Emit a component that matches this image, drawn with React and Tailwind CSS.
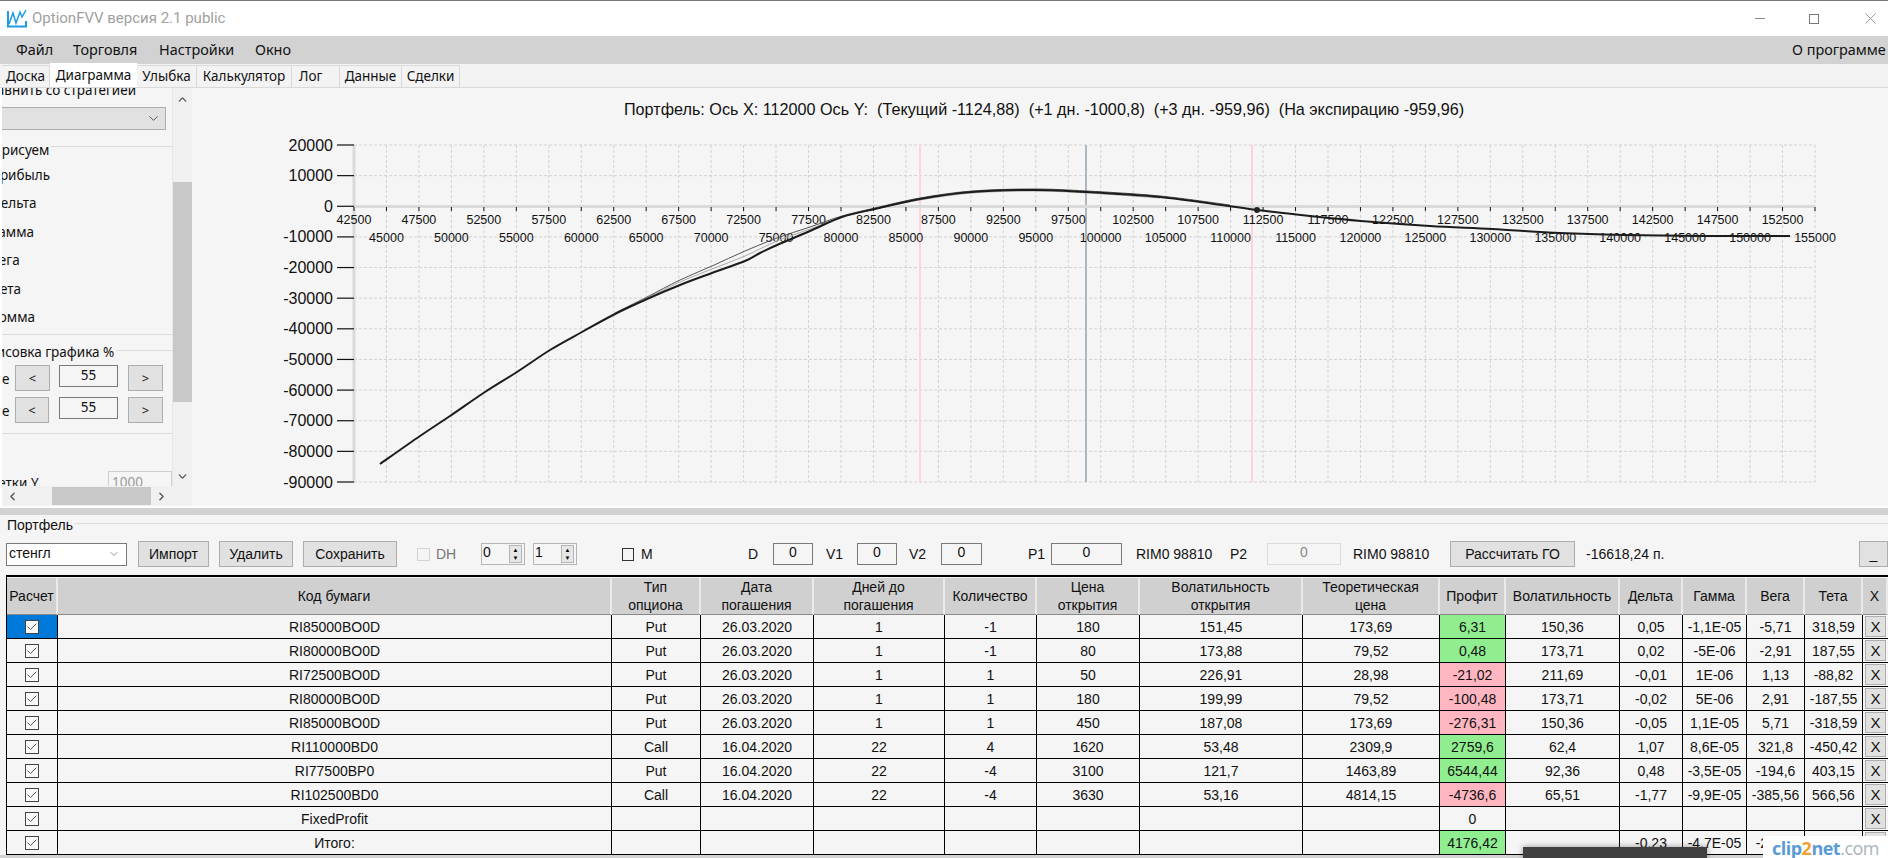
import { ChevronDown, ChevronLeft, ChevronRight, ChevronUp, Check } from "lucide-react";

const columns = [51, 554, 89, 113, 131, 92, 103, 163, 137, 66, 114, 63, 64, 58, 58, 25];

const headers = [
  ["Расчет"],
  ["Код бумаги"],
  ["Тип", "опциона"],
  ["Дата", "погашения"],
  ["Дней до", "погашения"],
  ["Количество"],
  ["Цена", "открытия"],
  ["Волатильность", "открытия"],
  ["Теоретическая", "цена"],
  ["Профит"],
  ["Волатильность"],
  ["Дельта"],
  ["Гамма"],
  ["Вега"],
  ["Тета"],
  ["X"],
];

const rows = [
  ["RI85000BO0D", "Put", "26.03.2020", "1", "-1", "180", "151,45", "173,69", "6,31", "150,36", "0,05", "-1,1E-05", "-5,71", "318,59"],
  ["RI80000BO0D", "Put", "26.03.2020", "1", "-1", "80", "173,88", "79,52", "0,48", "173,71", "0,02", "-5E-06", "-2,91", "187,55"],
  ["RI72500BO0D", "Put", "26.03.2020", "1", "1", "50", "226,91", "28,98", "-21,02", "211,69", "-0,01", "1E-06", "1,13", "-88,82"],
  ["RI80000BO0D", "Put", "26.03.2020", "1", "1", "180", "199,99", "79,52", "-100,48", "173,71", "-0,02", "5E-06", "2,91", "-187,55"],
  ["RI85000BO0D", "Put", "26.03.2020", "1", "1", "450", "187,08", "173,69", "-276,31", "150,36", "-0,05", "1,1E-05", "5,71", "-318,59"],
  ["RI110000BD0", "Call", "16.04.2020", "22", "4", "1620", "53,48", "2309,9", "2759,6", "62,4", "1,07", "8,6E-05", "321,8", "-450,42"],
  ["RI77500BP0", "Put", "16.04.2020", "22", "-4", "3100", "121,7", "1463,89", "6544,44", "92,36", "0,48", "-3,5E-05", "-194,6", "403,15"],
  ["RI102500BD0", "Call", "16.04.2020", "22", "-4", "3630", "53,16", "4814,15", "-4736,6", "65,51", "-1,77", "-9,9E-05", "-385,56", "566,56"],
  ["FixedProfit", "", "", "", "", "", "", "", "0", "", "", "", "", ""],
  ["Итого:", "", "", "", "", "", "", "", "4176,42", "", "-0,23", "-4,7E-05", "-258,3", ""],
];

const tabs = [
  { name: "Доска", w: "w-[48px] justify-center" },
  { name: "Диаграмма", w: "w-[87px] justify-center", active: true },
  { name: "Улыбка", w: "w-[60px] justify-center" },
  { name: "Калькулятор", w: "w-[95px] justify-center" },
  { name: "Лог", w: "w-[48px] pl-[7px]" },
  { name: "Данные", w: "w-[62px] justify-center" },
  { name: "Сделки", w: "w-[58px] justify-center" },
];

// chart geometry, in page coordinates
const LEFT = 354;
const RIGHT = 1815;
const TOP = 145;
const BOTTOM = 482;
const stepX = (RIGHT - LEFT) / 45;
const stepY = (BOTTOM - TOP) / 11;

const mainCurve = [
  [380, 464], [420, 436], [450, 416], [485, 392], [517, 372], [550, 350], [582, 332], [615, 314], [647, 299],
  [680, 285], [712, 273], [745, 261], [760, 253], [777, 245], [810, 231], [842, 217], [875, 209], [920, 199],
  [972, 192], [1033, 190], [1087, 192], [1120, 194], [1160, 197], [1200, 202], [1257, 210], [1310, 216],
  [1361, 221], [1430, 226], [1492, 229], [1560, 233], [1623, 235], [1700, 236], [1790, 236],
];
const upperCurve = [
  [615, 313], [647, 297], [680, 280], [712, 266], [745, 251], [777, 238], [810, 227], [842, 216], [875, 208],
  [920, 198], [972, 191], [1033, 189], [1087, 191], [1160, 196], [1230, 205],
];
const lightCurve = [
  [647, 298], [680, 282], [712, 269], [745, 256], [777, 241], [810, 229], [842, 217], [875, 209], [920, 200],
  [972, 193], [1033, 191], [1087, 193], [1160, 198],
];

// catmull-rom through the points
function smooth(pts) {
  let d = `M${pts[0][0]} ${pts[0][1]}`;
  for (let i = 0; i < pts.length - 1; i++) {
    const p0 = pts[i - 1] || pts[i];
    const p1 = pts[i];
    const p2 = pts[i + 1];
    const p3 = pts[i + 2] || p2;
    const c1x = p1[0] + (p2[0] - p0[0]) / 6;
    const c1y = p1[1] + (p2[1] - p0[1]) / 6;
    const c2x = p2[0] - (p3[0] - p1[0]) / 6;
    const c2y = p2[1] - (p3[1] - p1[1]) / 6;
    d += ` C${c1x} ${c1y} ${c2x} ${c2y} ${p2[0]} ${p2[1]}`;
  }
  return d;
}

function Chart() {
  const vertical = Array.from({ length: 46 }, (_, i) => LEFT + i * stepX);
  const horizontal = Array.from({ length: 12 }, (_, i) => TOP + i * stepY);
  return (
    <svg width="1696" height="418" viewBox="192 88 1696 418" className="block shrink-0 font-['Liberation_Sans',Arial,sans-serif]">
      <text x="1044" y="115" textAnchor="middle" fontSize="16.2" fill="#111" className="whitespace-pre">
        {"Портфель: Ось X: 112000 Ось Y:  (Текущий -1124,88)  (+1 дн. -1000,8)  (+3 дн. -959,96)  (На экспирацию -959,96)"}
      </text>
      {vertical.map((x) => (
        <line key={x} x1={x} x2={x} y1={TOP} y2={BOTTOM} stroke="#d2d2d2" strokeDasharray="3 2" />
      ))}
      {horizontal.map((y) => (
        <line key={y} x1={LEFT} x2={RIGHT} y1={y} y2={y} stroke="#d2d2d2" strokeDasharray="3 2" />
      ))}
      <line x1={920} x2={920} y1={TOP} y2={BOTTOM} stroke="#ffd2dc" strokeWidth="2" />
      <line x1={1252} x2={1252} y1={TOP} y2={BOTTOM} stroke="#ffd2dc" strokeWidth="2" />
      <line x1={1086} x2={1086} y1={TOP} y2={BOTTOM} stroke="#aeb7c0" strokeWidth="2" />
      <line x1={LEFT} x2={LEFT} y1={TOP} y2={BOTTOM} stroke="#dadada" strokeWidth="3" />
      <line x1={LEFT} x2={RIGHT} y1={206.5} y2={206.5} stroke="#dadada" strokeWidth="3" />
      {vertical.map((x) => (
        <line key={x} x1={x} x2={x} y1={207} y2={211} stroke="#111" />
      ))}
      {horizontal.map((y, i) => (
        <g key={y}>
          <line x1={337} x2={LEFT} y1={y} y2={y} stroke="#111" strokeWidth="1.2" />
          <text x="333" y={y + 5.5} textAnchor="end" fontSize="16" fill="#111">
            {20000 - i * 10000}
          </text>
        </g>
      ))}
      {vertical.map((x, i) => (
        <text
          key={x}
          x={x}
          y={i % 2 === 0 ? 224 : 242}
          textAnchor="middle"
          fontSize="12.5"
          fill="#111"
        >
          {42500 + i * 2500}
        </text>
      ))}
      <path d={smooth(lightCurve)} fill="none" stroke="#aaaaaa" strokeWidth="1" />
      <path d={smooth(upperCurve)} fill="none" stroke="#555555" strokeWidth="1" />
      <path d={smooth(mainCurve)} fill="none" stroke="#1c1c1c" strokeWidth="2" strokeLinejoin="round" />
      <circle cx="1257" cy="210" r="3" fill="#222" />
    </svg>
  );
}

function Logo() {
  return (
    <svg width="20" height="20" viewBox="0 0 20 20" fill="none" stroke="#1c9ce5" className="ml-[7px] shrink-0">
      <path d="M1 2 V17.5 H19 V12" strokeWidth="2" />
      <path d="M2 15 L6 4 L9 14 L13 3 L15 8 L19 1" strokeWidth="1.5" />
    </svg>
  );
}

function CheckBox({ className = "" }) {
  return (
    <span className={`inline-flex h-[14px] w-[14px] items-center justify-center border border-[#444] bg-[#f8f8f8] align-middle ${className}`}>
      <Check size={12} strokeWidth={1.5} color="#222" />
    </span>
  );
}

function Btn({ w, h = "h-[26px]", ml = "", children }) {
  return (
    <button className={`${w} ${h} ${ml} shrink-0 border border-[#adadad] bg-[#e1e1e1] text-[14px] text-[#111]`}>
      {children}
    </button>
  );
}

function Box({ w, ml, children, disabled }) {
  return (
    <div
      className={`${w} ${ml} flex h-[22px] shrink-0 items-center justify-center border ${
        disabled ? "border-[#dadada] text-[#888]" : "border-[#7a7a7a] text-[#111]"
      } bg-[#f5f5f5] pb-[3px]`}
    >
      {children}
    </div>
  );
}

function Spin({ value, ml }) {
  return (
    <div className={`${ml} flex h-[22px] w-[44px] shrink-0 items-center justify-between border border-[#b5b5b5] pr-[2px] pl-[1px]`}>
      <span className="pb-[3px]">{value}</span>
      <div className="flex h-[18px] w-[13px] flex-col border border-[#b5b5b5] bg-[#e6e6e6] text-center text-[6px] leading-[8px] text-black">
        <span className="h-[8px]">▲</span>
        <span className="h-[8px]">▼</span>
      </div>
    </div>
  );
}

function PanelRow({ text, ml }) {
  return (
    <div className={`flex h-[28.4px] items-center whitespace-nowrap ${ml}`}>{text}</div>
  );
}

function StepRow({ leftW, mt }) {
  return (
    <div className={`flex h-[26px] ${mt}`}>
      <span className="w-[13px] shrink-0 pt-[4px]">е</span>
      <button className={`${leftW} h-[26px] shrink-0 border border-[#adadad] bg-[#e1e1e1] text-[13px]`}>&lt;</button>
      <div className="ml-auto flex h-[22px] w-[59px] shrink-0 items-center justify-center border border-[#7a7a7a] pb-[3px]">55</div>
      <button className="mr-[9px] ml-[10px] h-[26px] w-[35px] shrink-0 border border-[#adadad] bg-[#e1e1e1] text-[13px]">&gt;</button>
    </div>
  );
}

function LeftPanel() {
  return (
    <div className="flex h-[418px] w-[173px] shrink-0 flex-col border-l-2 border-white bg-[#f5f5f5] font-['Noto_Sans',sans-serif] text-[13.5px] text-[#111]">
      <div className="h-[398px] overflow-hidden border-r border-[#e6e6e6]">
        <div className="-mt-[8px] -ml-[22px] h-[20px] leading-[20px] whitespace-nowrap">Сравнить со стратегией</div>
        <div className="mt-[7px] flex h-[23px] w-[164px] items-center justify-end border-y border-r border-[#adadad] bg-[#e1e1e1] pr-[4px]">
          <ChevronDown size={15} strokeWidth={1.4} color="#444" />
        </div>
        <div className="mt-[10px] flex h-[20px]">
          <span className="-ml-[27px] leading-[20px] whitespace-nowrap">Что рисуем</span>
          <div className="mt-[6px] ml-[2px] flex-1 border-t border-[#dcdcdc]" />
        </div>
        <div className="mt-px">
          <PanelRow text="Прибыль" ml="-ml-[12px]" />
          <PanelRow text="Дельта" ml="-ml-[11px]" />
          <PanelRow text="Гамма" ml="-ml-[10px]" />
          <PanelRow text="Вега" ml="-ml-[12px]" />
          <PanelRow text="Тета" ml="-ml-[9px]" />
          <PanelRow text="Вомма" ml="-ml-[12px]" />
        </div>
        <div className="mt-[3px] border-t border-[#dcdcdc]" />
        <div className="mt-[7px] flex h-[20px]">
          <span className="-ml-[30px] leading-[20px] whitespace-nowrap">Отрисовка графика %</span>
          <div className="mt-[8px] ml-[3px] flex-1 border-t border-[#dcdcdc]" />
        </div>
        <div className="mt-[3px]">
          <StepRow leftW="w-[35px]" />
          <StepRow leftW="w-[34px]" mt="mt-[6px]" />
        </div>
        <div className="mt-[10px] border-t border-[#dcdcdc]" />
        <div className="mt-[37px] flex h-[24px]">
          <span className="-ml-[36px] pt-[2px] whitespace-nowrap">Разметки Y</span>
          <div className="ml-auto h-[22px] w-[64px] border border-[#cfcfcf] pl-[3px] text-[#999]">1000</div>
        </div>
      </div>
      <div className="flex h-[20px] items-center bg-[#f0f0f0]">
        <ChevronLeft size={13} strokeWidth={2.5} color="#555" className="ml-[4px] shrink-0" />
        <div className="ml-[33px] h-[18px] w-[99px] bg-[#c8c8c8]" />
        <ChevronRight size={13} strokeWidth={2.5} color="#555" className="ml-[4px] shrink-0" />
      </div>
    </div>
  );
}

function VerticalScroll() {
  return (
    <div className="flex h-[418px] w-[19px] shrink-0 flex-col items-center bg-[#f0f0f0]">
      <div className="flex h-[22px] items-center">
        <ChevronUp size={13} strokeWidth={2.5} color="#555" />
      </div>
      <div className="mt-[72px] h-[220px] w-full bg-[#c8c8c8]" />
      <div className="mt-[63px] flex h-[22px] items-center">
        <ChevronDown size={13} strokeWidth={2.5} color="#555" />
      </div>
    </div>
  );
}

function Toolbar() {
  return (
    <div className="flex h-[28px] items-center text-[14px] text-[#111]">
      <div className="ml-[6px] flex h-[23px] w-[121px] shrink-0 items-center justify-between border border-[#7a7a7a] bg-white pr-[6px] pb-px pl-[2px]">
        стенгл
        <ChevronDown size={12} strokeWidth={1.2} color="#555" />
      </div>
      <Btn w="w-[71px]" ml="ml-[11px]">Импорт</Btn>
      <Btn w="w-[74px]" ml="ml-[10px]">Удалить</Btn>
      <Btn w="w-[94px]" ml="ml-[10px]">Сохранить</Btn>
      <span className="ml-[20px] h-[13px] w-[13px] shrink-0 border border-[#d4d4d4]" />
      <span className="ml-[6px] w-[20px] shrink-0 text-[#777]">DH</span>
      <Spin value="0" ml="ml-[25px]" />
      <Spin value="1" ml="ml-[8px]" />
      <span className="ml-[45px] h-[13px] w-[12px] shrink-0 border border-[#333]" />
      <span className="ml-[7px] w-[11px] shrink-0">M</span>
      <span className="ml-[96px] w-[10px] shrink-0">D</span>
      <Box w="w-[40px]" ml="ml-[15px]">0</Box>
      <span className="ml-[13px] w-[15px] shrink-0">V1</span>
      <Box w="w-[40px]" ml="ml-[16px]">0</Box>
      <span className="ml-[12px] w-[17px] shrink-0">V2</span>
      <Box w="w-[41px]" ml="ml-[15px]">0</Box>
      <span className="ml-[46px] w-[16px] shrink-0">P1</span>
      <Box w="w-[71px]" ml="ml-[7px]">0</Box>
      <span className="ml-[14px] w-[76px] shrink-0 whitespace-nowrap">RIM0 98810</span>
      <span className="ml-[18px] w-[17px] shrink-0">P2</span>
      <Box w="w-[74px]" ml="ml-[20px]" disabled>0</Box>
      <span className="ml-[12px] w-[76px] shrink-0 whitespace-nowrap">RIM0 98810</span>
      <Btn w="w-[125px]" ml="ml-[21px]">Рассчитать ГО</Btn>
      <span className="ml-[11px] w-[80px] shrink-0 whitespace-nowrap">-16618,24 п.</span>
      <Btn w="w-[29px]" ml="ml-auto">_</Btn>
    </div>
  );
}

function profitBg(value) {
  if (value === "0") return "bg-[#f5f5f5]";
  return value.startsWith("-") ? "bg-[#ffb6c1]" : "bg-[#90ee90]";
}

function PortfolioTable() {
  return (
    <div className="mt-[7px] ml-[6px] border-t-2 border-l border-black pt-px text-[14px] text-[#111]">
      <table className="w-[1881px] table-fixed border-separate border-spacing-0">
        <colgroup>
          {columns.map((w, i) => (
            <col key={i} style={{ width: w }} />
          ))}
        </colgroup>
        <thead>
          <tr>
            {headers.map((lines, i) => (
              <th
                key={i}
                className="h-[36px] overflow-hidden border-r-2 border-b border-[#eaeaea] border-b-[#8a8a8a] bg-[#d0d0d0] p-0 text-center align-middle leading-[18px] font-normal whitespace-nowrap"
              >
                {lines.map((line) => (
                  <div key={line}>{line}</div>
                ))}
              </th>
            ))}
          </tr>
        </thead>
        <tbody>
          {rows.map((row, r) => (
            <tr key={r}>
              <td className={`h-[24px] border-r border-b border-black p-0 text-center leading-none ${r === 0 ? "bg-[#0078d7]" : "bg-[#f5f5f5]"}`}>
                <CheckBox />
              </td>
              {row.map((cell, c) => (
                <td
                  key={c}
                  className={`h-[24px] overflow-hidden border-r border-b border-black p-0 text-center leading-none whitespace-nowrap ${
                    c === 8 ? profitBg(cell) : "bg-[#f5f5f5]"
                  }`}
                >
                  {cell}
                </td>
              ))}
              <td className="h-[24px] border-b border-black bg-[#f5f5f5] p-0 pr-[1px] pl-[2px]">
                <button className="block h-[21px] w-[21px] border border-[#adadad] bg-[#e1e1e1] text-[15px] leading-none">X</button>
              </td>
            </tr>
          ))}
        </tbody>
      </table>
    </div>
  );
}

export default function App() {
  return (
    <div className="relative flex h-[858px] w-[1888px] flex-col overflow-hidden bg-[#f5f5f5] font-['Liberation_Sans',Arial,sans-serif]">
      {/* title bar */}
      <div className="flex h-[36px] shrink-0 items-center border-t border-[#777] bg-white">
        <Logo />
        <span className="ml-[5px] font-['Roboto',sans-serif] text-[15px] text-[#a0a0a0]">OptionFVV версия 2.1 public</span>
        <div className="ml-auto flex items-center">
          <div className="h-px w-[10px] bg-[#888]" />
          <div className="ml-[44px] h-[10px] w-[10px] border border-[#777]" />
          <svg width="11" height="11" viewBox="0 0 11 11" stroke="#999" className="mr-[12px] ml-[46px]">
            <path d="M0.5 0.5 L10.5 10.5 M10.5 0.5 L0.5 10.5" />
          </svg>
        </div>
      </div>

      {/* menu */}
      <div className="flex h-[28px] shrink-0 items-center bg-[#d2d2d2] font-['Noto_Sans',sans-serif] text-[14.4px] text-[#111]">
        <span className="ml-[16px] w-[36px]">Файл</span>
        <span className="ml-[21px] w-[64px] whitespace-nowrap">Торговля</span>
        <span className="ml-[22px] w-[74px] whitespace-nowrap">Настройки</span>
        <span className="ml-[22px]">Окно</span>
        <span className="ml-auto w-[96px] whitespace-nowrap">О программе</span>
      </div>

      {/* tabs */}
      <div className="flex h-[24px] shrink-0 items-end border-b border-[#d9d9d9] bg-[#f3f3f3] pl-[2px] font-['Noto_Sans',sans-serif] text-[13.5px] text-[#111]">
        {tabs.map((t) => (
          <div
            key={t.name}
            className={`${t.w} flex shrink-0 items-center whitespace-nowrap ${
              t.active ? "h-[24px] bg-white" : "h-[22px] border-t border-r border-[#d9d9d9]"
            }`}
          >
            {t.name}
          </div>
        ))}
      </div>

      {/* chart area */}
      <div className="flex h-[418px] shrink-0">
        <LeftPanel />
        <VerticalScroll />
        <Chart />
      </div>

      <div className="h-[2px] shrink-0 bg-white" />
      <div className="h-[7px] shrink-0 bg-[#d2d2d2]" />

      {/* portfolio */}
      <div className="flex h-[25px] shrink-0 text-[14px] text-[#111]">
        <span className="ml-[7px] leading-[20px]">Портфель</span>
        <div className="mt-[8px] ml-[2px] flex-1 border-t border-[#dcdcdc]" />
      </div>
      <Toolbar />
      <PortfolioTable />
      <div className="flex-1 bg-[#d2d2d2]" />

      {/* screenshot tool overlay */}
      <div className="absolute right-[181px] bottom-0 h-[11px] w-[184px] bg-[#404040] shadow-[0_0_6px_rgba(0,0,0,0.4)]" />
      <div className="absolute right-0 bottom-0 flex h-[22px] w-[125px] items-center justify-center bg-white pt-[2px] font-['Open_Sans',sans-serif] text-[18px] leading-none font-bold tracking-[-0.5px] text-[#5b9bd5]">
        clip<span className="text-[#f0a030]">2</span>net<span className="font-normal text-[#aab4bd]">.com</span>
      </div>
    </div>
  );
}
